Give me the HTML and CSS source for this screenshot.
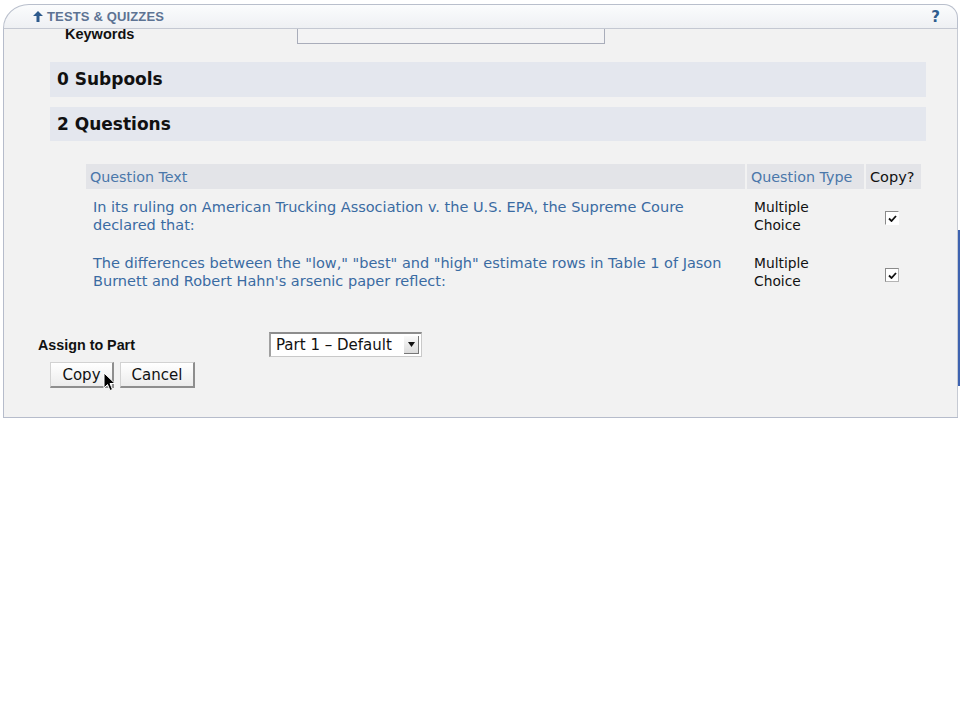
FILE: index.html
```html
<!DOCTYPE html>
<html>
<head>
<meta charset="utf-8">
<link rel="stylesheet" href="styles.css">
</head>
<body>
<div class="page">
  <div class="panel">
    <div class="tabbar">
      <div class="title">
        <svg class="arrow" width="10" height="11" viewBox="0 0 10 11"><path d="M5 0 L10 5 L6.5 5 L6.5 11 L3.5 11 L3.5 5 L0 5 Z" fill="#2d5a8c"/></svg>
        <span>TESTS &amp; QUIZZES</span>
      </div>
      <span class="help">?</span>
    </div>
    <div class="content">
      <div class="kwrow">
        <span class="kwlabel">Keywords</span>
        <span class="kwinput"></span>
      </div>
      <div class="section">0 Subpools</div>
      <div class="section">2 Questions</div>
      <table class="qtable">
        <thead>
          <tr>
            <th class="c-text">Question Text</th>
            <th class="c-type">Question Type</th>
            <th class="c-copy">Copy?</th>
          </tr>
        </thead>
        <tbody>
          <tr>
            <td class="c-text">In its ruling on American Trucking Association v. the U.S. EPA, the Supreme Coure declared that:</td>
            <td class="c-type">Multiple<br>Choice</td>
            <td class="c-copy"><span class="cb cb-first"><svg width="9" height="7" viewBox="0 0 9 7"><path d="M1 3.5 L3.5 6 L8 1" stroke="#111" stroke-width="1.8" fill="none"/></svg></span></td>
          </tr>
          <tr>
            <td class="c-text">The differences between the "low," "best" and "high" estimate rows in Table 1 of Jason Burnett and Robert Hahn's arsenic paper reflect:</td>
            <td class="c-type">Multiple<br>Choice</td>
            <td class="c-copy c-copy2"><span class="cb"><svg width="9" height="7" viewBox="0 0 9 7"><path d="M1 3.5 L3.5 6 L8 1" stroke="#111" stroke-width="1.8" fill="none"/></svg></span></td>
          </tr>
        </tbody>
      </table>
      <div class="assign">
        <span class="alabel">Assign to Part</span>
        <span class="select"><span class="seltext">Part 1 – Default</span><span class="selbtn"><svg width="7" height="5" viewBox="0 0 7 5"><path d="M0 0 H7 L3.5 5 Z" fill="#111"/></svg></span></span>
      </div>
      <div class="buttons">
        <span class="btn btn-copy">Copy
          <svg class="cursor" width="13" height="20" viewBox="0 0 13 20"><path d="M1 1 L1 16 L4.5 12.5 L7 18.5 L9.5 17.5 L7 11.5 L12 11.5 Z" fill="#000" stroke="#fff" stroke-width="1"/></svg>
        </span>
        <span class="btn btn-cancel">Cancel</span>
      </div>
    </div>
  </div>
  <div class="edge"></div>
</div>
</body>
</html>
```

FILE: styles.css
```css
html, body {
  margin: 0;
  padding: 0;
  background: #ffffff;
}
.page {
  display: flex;
  align-items: flex-start;
  padding-top: 4px;
  padding-left: 3px;
}
.panel {
  width: 955px;
  box-sizing: border-box;
  border-bottom: 1px solid #b6bccb;
}
.tabbar {
  height: 25px;
  box-sizing: border-box;
  border: 1px solid #b9bfcc;
  border-bottom: 1px solid #c4c8d2;
  border-radius: 26px 14px 0 0 / 24px 14px 0 0;
  background: linear-gradient(#fbfcfd, #eef0f3);
  display: flex;
  align-items: center;
  justify-content: space-between;
  padding: 0 17px 0 29px;
}
.title {
  display: flex;
  align-items: center;
  gap: 4px;
  font-family: "Liberation Sans", Arial, sans-serif;
  font-weight: bold;
  font-size: 13px;
  letter-spacing: 0.15px;
  color: #5d7393;
}
.arrow { display: block; margin-top: -1px; }
.help {
  font-family: "DejaVu Sans", Verdana, sans-serif;
  font-weight: bold;
  font-size: 15px;
  color: #2f5d8f;
}
.content {
  height: 388px;
  overflow: hidden;
  background: #f2f2f2;
  border-left: 1px solid #b6bccb;
  border-right: 1px solid #c6cad3;
  box-sizing: border-box;
}
.kwrow {
  display: flex;
  align-items: flex-start;
  margin-top: -2px;
  height: 18px;
}
.kwlabel {
  font-family: "Liberation Sans", Arial, sans-serif;
  font-weight: bold;
  font-size: 14.5px;
  color: #111;
  margin-left: 61px;
  width: 232px;
  line-height: 15px;
}
.kwinput {
  display: block;
  width: 308px;
  height: 17px;
  box-sizing: border-box;
  border: 1px solid #a9adba;
  border-top: none;
  background: #f3f3f4;
}
.section {
  margin: 17px 0 0 46px;
  width: 876px;
  height: 35px;
  background: #e4e7ee;
  font-family: "DejaVu Sans", Verdana, sans-serif;
  font-weight: bold;
  font-size: 17px;
  color: #111;
  line-height: 35px;
  padding-left: 7px;
  box-sizing: border-box;
}
.section + .section {
  margin-top: 10px;
  height: 34px;
  line-height: 34px;
}
.qtable {
  margin: 23px 0 0 80px;
  width: 839px;
  table-layout: fixed;
  border-collapse: separate;
  border-spacing: 2px 0;
}
.qtable th, .qtable td {
  box-sizing: border-box;
}
.qtable th {
  background: #e3e4e8;
  height: 25px;
  padding: 0 0 0 4px;
  text-align: left;
  font-weight: normal;
  font-family: "DejaVu Sans", Verdana, sans-serif;
  font-size: 14.3px;
  color: #4a77aa;
  white-space: nowrap;
}
.qtable th.c-copy { color: #111; font-size: 14.5px; }
.qtable td {
  vertical-align: top;
  padding: 9px 0 11px 0;
  font-family: "DejaVu Sans", Verdana, sans-serif;
  font-size: 14.5px;
  line-height: 18px;
}
.qtable td.c-text {
  color: #3a6ba2;
  padding-left: 7px;
  padding-right: 10px;
}
.qtable td.c-type {
  color: #111;
  padding-left: 7px;
  font-size: 13.8px;
}
.qtable td.c-copy {
  text-align: left;
  padding-top: 22px;
  padding-left: 19px;
  line-height: 14px;
}
.qtable td.c-copy2 { padding-top: 23px; }
.c-text { width: 659px; }
.c-type { width: 117px; }
.c-copy { width: 55px; }
.cb {
  display: inline-flex;
  align-items: center;
  justify-content: center;
  width: 14px;
  height: 14px;
  box-sizing: border-box;
  background: #fff;
  border: 1px solid #b4b4b4;
  border-top-color: #8a8a8a;
  border-left-color: #8a8a8a;
  vertical-align: top;
}
.cb-first {
  border-right-color: #fff;
  border-bottom-color: #fff;
}
.assign {
  display: flex;
  align-items: center;
  margin-top: 31px;
  padding-left: 34px;
}
.alabel {
  width: 231px;
  font-family: "Liberation Sans", Arial, sans-serif;
  font-weight: bold;
  font-size: 14.3px;
  color: #111;
}
.select {
  display: flex;
  align-items: center;
  width: 153px;
  height: 25px;
  box-sizing: border-box;
  background: #fff;
  border: 1px solid #c9c9c9;
  border-top: 2px solid #8d8d8d;
  border-left: 2px solid #a0a0a0;
  padding-left: 5px;
  font-family: "DejaVu Sans", "Lucida Grande", sans-serif;
  font-size: 15px;
  color: #111;
}
.seltext { flex: 1; white-space: nowrap; }
.selbtn {
  width: 15px;
  height: 18px;
  margin-right: 2px;
  display: flex;
  align-items: center;
  justify-content: center;
  background: linear-gradient(#fafafa, #dcdcdc);
  border-right: 1px solid #777;
  border-bottom: 1px solid #777;
  box-sizing: border-box;
}
.buttons {
  display: flex;
  gap: 6px;
  margin-top: 5px;
  padding-left: 46px;
}
.btn {
  position: relative;
  display: inline-flex;
  align-items: center;
  justify-content: center;
  height: 26px;
  box-sizing: border-box;
  padding: 0 11px;
  background: linear-gradient(#ffffff, #ececec);
  border: 1px solid #d2d2d2;
  border-right: 2px solid #8e8e8e;
  border-bottom: 2px solid #8e8e8e;
  font-family: "DejaVu Sans", "Lucida Grande", sans-serif;
  font-size: 15px;
  color: #111;
}
.btn-copy { width: 64px; }
.btn-cancel { width: 75px; }
.cursor {
  position: absolute;
  left: 52px;
  top: 9px;
}
.edge {
  width: 2px;
  height: 156px;
  margin-top: 226px;
  background: #3e63b0;
}
```
